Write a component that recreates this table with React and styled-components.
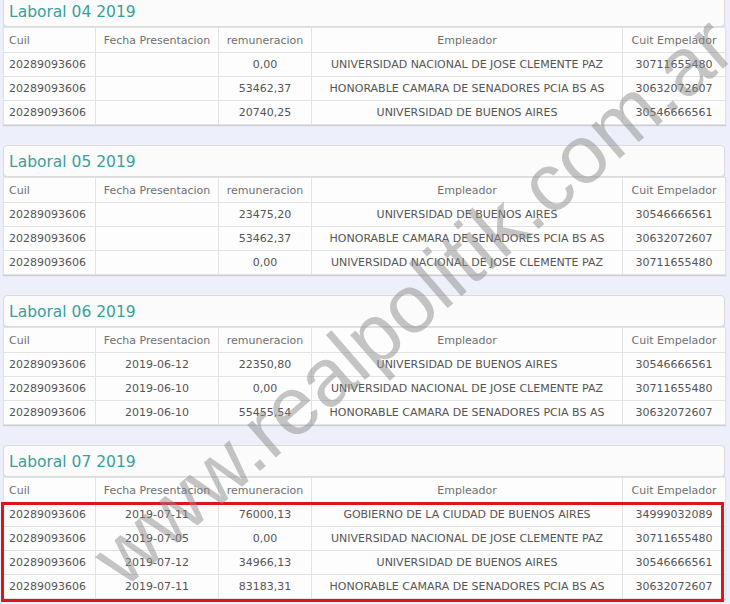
import React from "react";
import styled, { createGlobalStyle } from "styled-components";

const Global = createGlobalStyle`
  html, body { margin: 0; padding: 0; background: #edf0fa; overflow: hidden; }
  body { font-family: "DejaVu Sans", Verdana, sans-serif; }
`;

const Page = styled.div`
  position: relative;
  width: 730px;
  height: 604px;
  overflow: hidden;
  background: #edf0fa;
`;

const Stack = styled.div`
  display: flex;
  flex-direction: column;
  gap: 20px;
  margin-top: -5px;
  padding: 0 5px 0 3px;
`;

const Panel = styled.section`
  display: flex;
  flex-direction: column;
`;

const PanelHeader = styled.div`
  height: 32px;
  box-sizing: border-box;
  display: flex;
  align-items: center;
  padding: 1px 5px 0;
  background: #fbfbfb;
  border: 1px solid #dcdcdc;
  border-radius: 4px;
  box-shadow: 0 1px 1px rgba(0, 0, 0, 0.12);
`;

const Title = styled.h3`
  margin: 0;
  font-family: "DejaVu Sans", Verdana, sans-serif;
  font-weight: normal;
  font-size: 15.5px;
  color: #3a9f9d;
`;

const Table = styled.table`
  width: 100%;
  border-collapse: collapse;
  table-layout: fixed;
  background: #fdfdfd;
  box-shadow: 0 1px 1px rgba(0, 0, 0, 0.14);
  font-size: 11px;
`;

const Cell = styled.td`
  height: ${(p) => (p.$head ? "25px" : "24px")};
  padding: 0 5px;
  border: 1px solid #e3e3e3;
  color: ${(p) => (p.$head ? "#707070" : "#555555")};
  text-align: ${(p) => (p.$left ? "left" : "center")};
  white-space: nowrap;
  overflow: hidden;
  font-weight: normal;
  box-sizing: border-box;
`;

const Highlight = styled.div`
  position: absolute;
  left: 1px;
  top: 502px;
  width: 723px;
  height: 100px;
  box-sizing: border-box;
  border: 3px solid #e0131b;
  pointer-events: none;
`;

const Watermark = styled.div`
  position: absolute;
  left: 413px;
  top: 301px;
  transform: translate(-50%, -50%) rotate(-41deg);
  font-family: "Liberation Sans", Arial, sans-serif;
  font-size: 82px;
  color: rgba(140, 140, 140, 0.5);
  white-space: nowrap;
  pointer-events: none;
`;

const widths = [92, 123, 93, 311, 103];
const heads = ["Cuil", "Fecha Presentacion", "remuneracion", "Empleador", "Cuit Empelador"];

const UNJCP = "UNIVERSIDAD NACIONAL DE JOSE CLEMENTE PAZ";
const HCS = "HONORABLE CAMARA DE SENADORES PCIA BS AS";
const UBA = "UNIVERSIDAD DE BUENOS AIRES";
const GCBA = "GOBIERNO DE LA CIUDAD DE BUENOS AIRES";

const data = [
  {
    title: "Laboral 04 2019",
    rows: [
      ["", "0,00", UNJCP, "30711655480"],
      ["", "53462,37", HCS, "30632072607"],
      ["", "20740,25", UBA, "30546666561"],
    ],
  },
  {
    title: "Laboral 05 2019",
    rows: [
      ["", "23475,20", UBA, "30546666561"],
      ["", "53462,37", HCS, "30632072607"],
      ["", "0,00", UNJCP, "30711655480"],
    ],
  },
  {
    title: "Laboral 06 2019",
    rows: [
      ["2019-06-12", "22350,80", UBA, "30546666561"],
      ["2019-06-10", "0,00", UNJCP, "30711655480"],
      ["2019-06-10", "55455,54", HCS, "30632072607"],
    ],
  },
  {
    title: "Laboral 07 2019",
    rows: [
      ["2019-07-11", "76000,13", GCBA, "34999032089"],
      ["2019-07-05", "0,00", UNJCP, "30711655480"],
      ["2019-07-12", "34966,13", UBA, "30546666561"],
      ["2019-07-11", "83183,31", HCS, "30632072607"],
    ],
  },
];

export default function App() {
  return (
    <Page>
      <Global />
      <Stack>
        {data.map((d) => (
          <Panel key={d.title}>
            <PanelHeader>
              <Title>{d.title}</Title>
            </PanelHeader>
            <Table>
              <colgroup>
                {widths.map((w, i) => (
                  <col key={i} style={{ width: w }} />
                ))}
              </colgroup>
              <thead>
                <tr>
                  {heads.map((h, i) => (
                    <Cell as="th" key={h} $head $left={i === 0}>
                      {h}
                    </Cell>
                  ))}
                </tr>
              </thead>
              <tbody>
                {d.rows.map((r, ri) => (
                  <tr key={ri}>
                    <Cell $left>20289093606</Cell>
                    {r.map((c, ci) => (
                      <Cell key={ci}>{c}</Cell>
                    ))}
                  </tr>
                ))}
              </tbody>
            </Table>
          </Panel>
        ))}
      </Stack>
      <Highlight />
      <Watermark>www.realpolitik.com.ar</Watermark>
    </Page>
  );
}
